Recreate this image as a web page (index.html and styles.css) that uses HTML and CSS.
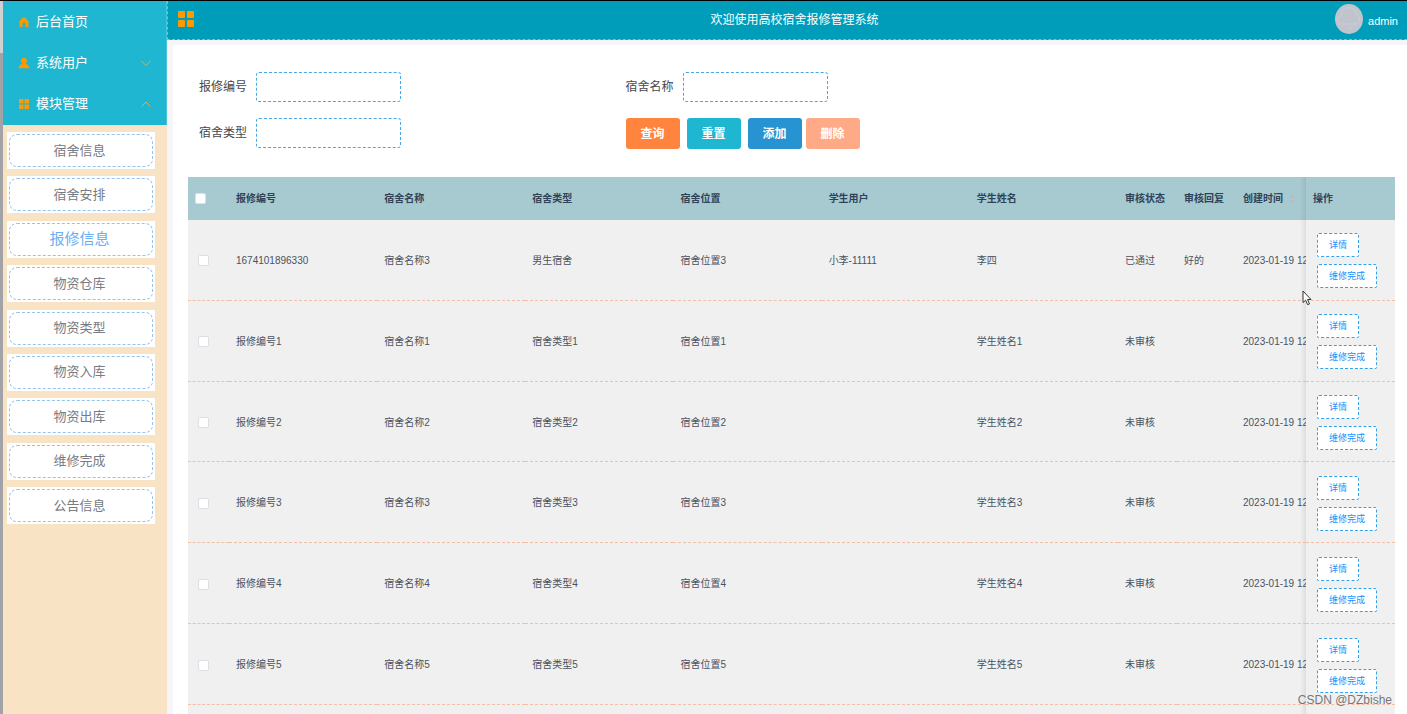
FILE: index.html
```html
<!DOCTYPE html>
<html lang="zh-CN">
<head>
<meta charset="utf-8">
<title>高校宿舍报修管理系统</title>
<link rel="stylesheet" href="styles.css">
</head>
<body>
<div class="app">
  <aside class="sidebar">
    <nav class="menu">
      <a class="menu-item" href="#"><svg class="menu-icon" viewBox="0 0 12 12"><path d="M6 .8 11.6 6.3H10.400V11H7.500V7.600Q7.500 6.500 6 6.500T4.500 7.600V11H1.600V6.300H.4Z"/></svg><span>后台首页</span></a>
      <a class="menu-item" href="#"><svg class="menu-icon" viewBox="0 0 12 12"><circle cx="6" cy="3.600" r="2.900"/><path d="M.6 11.300C.6 8.600 2 7.500 4.300 6.900V5H7.700V6.900C10 7.500 11.400 8.600 11.400 11.300Z"/></svg><span>系统用户</span><svg class="chevron" viewBox="0 0 12 12"><path d="m1.500 4 4.500 4.500L10.500 4"/></svg></a>
      <a class="menu-item" href="#"><svg class="menu-icon" viewBox="0 0 12 12"><path d="M1 1h4.500v4.500H1zM6.500 1H11v4.500H6.500zM1 6.500h4.500V11H1zM6.500 6.500H11V11H6.500z"/></svg><span>模块管理</span><svg class="chevron" viewBox="0 0 12 12"><path d="m1.500 8.500 4.500-4.500 4.500 4.500"/></svg></a>
    </nav>
    <ul class="submenu">
      <li class="sub-item"><a class="sub-link" href="#">宿舍信息</a></li>
      <li class="sub-item"><a class="sub-link" href="#">宿舍安排</a></li>
      <li class="sub-item"><a class="sub-link active" href="#">报修信息</a></li>
      <li class="sub-item"><a class="sub-link" href="#">物资仓库</a></li>
      <li class="sub-item"><a class="sub-link" href="#">物资类型</a></li>
      <li class="sub-item"><a class="sub-link" href="#">物资入库</a></li>
      <li class="sub-item"><a class="sub-link" href="#">物资出库</a></li>
      <li class="sub-item"><a class="sub-link" href="#">维修完成</a></li>
      <li class="sub-item"><a class="sub-link" href="#">公告信息</a></li>
    </ul>
  </aside>
  <div class="content">
    <header class="topbar">
      <button class="toggle" type="button" aria-label="菜单"><svg class="toggle-icon" viewBox="0 0 16 16"><rect width="7" height="7" rx="1"/><rect x="9" width="7" height="7" rx="1"/><rect y="9" width="7" height="7" rx="1"/><rect x="9" y="9" width="7" height="7" rx="1"/></svg></button>
      <h1 class="title">欢迎使用高校宿舍报修管理系统</h1>
      <div class="account">
        <svg class="avatar" viewBox="0 0 28 30"><ellipse cx="14" cy="15" rx="14" ry="15" fill="#c0c4cc"/><path d="M7 20a4 4 0 0 1-1-8 8 8 0 0 1 16-1 5 5 0 0 1 0 9H7M13 23l2 2 2-2" fill="none" stroke="#cbced5"/></svg>
        <span class="user-name">admin</span>
      </div>
    </header>
    <main class="panel">
      <form class="search">
        <div class="field"><label for="code">报修编号</label><input class="text" id="code" type="text"></div>
        <div class="field"><label for="dorm">宿舍名称</label><input class="text" id="dorm" type="text"></div>
        <div class="field"><label for="kind">宿舍类型</label><input class="text" id="kind" type="text"></div>
        <div class="actions">
          <div class="group"><button class="btn query" type="button">查询</button><button class="btn reset" type="button">重置</button></div>
          <div class="group tight"><button class="btn add" type="button">添加</button><button class="btn remove" type="button">删除</button></div>
        </div>
      </form>
      <div class="table-wrap">
        <table class="grid">
          <colgroup><col class="c-check"><col><col><col><col><col><col><col class="c-state"><col class="c-state"><col class="c-date"><col class="c-op"></colgroup>
          <thead>
            <tr><th class="check"><input class="box" type="checkbox" aria-label="全选"></th><th>报修编号</th><th>宿舍名称</th><th>宿舍类型</th><th>宿舍位置</th><th>学生用户</th><th>学生姓名</th><th>审核状态</th><th>审核回复</th><th class="date">创建时间<svg class="sort" viewBox="0 0 6 10"><path d="M3 0 6 4H0zM3 10 0 6h6z"/></svg></th><th>操作</th></tr>
          </thead>
          <tbody>
            <tr><td class="check"><input class="box" type="checkbox" aria-label="选择"></td><td>1674101896330</td><td>宿舍名称3</td><td>男生宿舍</td><td>宿舍位置3</td><td>小李-11111</td><td>李四</td><td>已通过</td><td>好的</td><td class="date">2023-01-19 12:18</td><td class="op"><div class="ops"><button class="mini" type="button">详情</button><button class="mini" type="button">维修完成</button></div></td></tr>
            <tr><td class="check"><input class="box" type="checkbox" aria-label="选择"></td><td>报修编号1</td><td>宿舍名称1</td><td>宿舍类型1</td><td>宿舍位置1</td><td></td><td>学生姓名1</td><td>未审核</td><td></td><td class="date">2023-01-19 12:18</td><td class="op"><div class="ops"><button class="mini" type="button">详情</button><button class="mini" type="button">维修完成</button></div></td></tr>
            <tr><td class="check"><input class="box" type="checkbox" aria-label="选择"></td><td>报修编号2</td><td>宿舍名称2</td><td>宿舍类型2</td><td>宿舍位置2</td><td></td><td>学生姓名2</td><td>未审核</td><td></td><td class="date">2023-01-19 12:18</td><td class="op"><div class="ops"><button class="mini" type="button">详情</button><button class="mini" type="button">维修完成</button></div></td></tr>
            <tr><td class="check"><input class="box" type="checkbox" aria-label="选择"></td><td>报修编号3</td><td>宿舍名称3</td><td>宿舍类型3</td><td>宿舍位置3</td><td></td><td>学生姓名3</td><td>未审核</td><td></td><td class="date">2023-01-19 12:18</td><td class="op"><div class="ops"><button class="mini" type="button">详情</button><button class="mini" type="button">维修完成</button></div></td></tr>
            <tr><td class="check"><input class="box" type="checkbox" aria-label="选择"></td><td>报修编号4</td><td>宿舍名称4</td><td>宿舍类型4</td><td>宿舍位置4</td><td></td><td>学生姓名4</td><td>未审核</td><td></td><td class="date">2023-01-19 12:18</td><td class="op"><div class="ops"><button class="mini" type="button">详情</button><button class="mini" type="button">维修完成</button></div></td></tr>
            <tr><td class="check"><input class="box" type="checkbox" aria-label="选择"></td><td>报修编号5</td><td>宿舍名称5</td><td>宿舍类型5</td><td>宿舍位置5</td><td></td><td>学生姓名5</td><td>未审核</td><td></td><td class="date">2023-01-19 12:18</td><td class="op"><div class="ops"><button class="mini" type="button">详情</button><button class="mini" type="button">维修完成</button></div></td></tr>
          </tbody>
        </table>
      </div>
    </main>
  </div>
</div>
<svg class="cursor" viewBox="0 0 10 16"><path d="M1 1v11.500l2.600-2.300 2 4.500 1.900-.8-2-4.400H9Z" fill="#fff" stroke="#333"/></svg>
<span class="watermark">CSDN @DZbishe</span>
</body>
</html>
```
FILE: styles.css
```css
* { box-sizing: border-box; }
body {
  margin: 0;
  height: 100vh;
  overflow: hidden;
  position: relative;
  background: #fff;
  color: #45484d;
  font: 12px/16px "Liberation Sans", "Noto Sans CJK SC", sans-serif;
}
button, input { font: inherit; }
a { color: inherit; text-decoration: none; }

.app {
  display: flex;
  height: 100vh;
  border-top: 1px solid #000;
}

/* Sidebar */
.sidebar {
  flex: 0 0 167px;
  padding-left: 3px;
  background: linear-gradient(#d0d0d0 52px, #a2a3a7 52px) left / 3px 100% no-repeat, #f8e3c4;
}
.menu {
  padding-bottom: 1px;
  background: #1eb6d0;
  border-right: 1px solid #45c3d8;
}
.menu-item {
  display: flex;
  align-items: center;
  height: 41px;
  padding: 0 14px 0 15px;
  gap: 6px;
  color: #fff;
  font-size: 13px;
}
.menu-icon { width: 12px; height: 12px; fill: #ff9900; }
.chevron {
  width: 12px;
  height: 12px;
  margin-left: auto;
  fill: none;
  stroke: #d9ae5c;
}
.submenu {
  display: flex;
  flex-direction: column;
  justify-content: space-between;
  min-height: 392px;
  margin: 7px 12px 0 4px;
  padding: 0;
  list-style: none;
}
.sub-item { padding: 2px; background: #fff; }
.sub-link {
  display: flex;
  align-items: center;
  justify-content: center;
  height: 33px;
  padding-right: 3px;
  border: 1px dashed #94c4ee;
  border-radius: 8px;
  color: #777b83;
  font-size: 13px;
}
.sub-link.active { color: #6aaef5; font-size: 15px; }

/* Top bar */
.content {
  flex: 1;
  min-width: 0;
  display: flex;
  flex-direction: column;
  background: #f5f5fa;
}
.topbar {
  display: grid;
  grid-template-columns: 1fr auto 1fr;
  align-items: center;
  height: 39px;
  padding: 0 9px 2px;
  border: 1px dashed #c8b43c;
  border-width: 0 0 1px 1px;
  background: #009dba;
  color: #fff;
}
.toggle { width: 18px; padding: 0 1px; border: 0; background: none; }
.toggle-icon { display: block; width: 16px; height: 16px; fill: #ff9900; }
.title {
  margin: 0;
  padding: 2px 0 0 14px;
  font-size: 12px;
  font-weight: 400;
}
.account {
  display: flex;
  align-items: center;
  justify-content: flex-end;
  gap: 5px;
  font-size: 11px;
}
.avatar { width: 28px; height: 30px; }
.user-name { padding-top: 3px; }

/* Panel */
.panel {
  flex: 1;
  min-height: 0;
  display: flex;
  flex-direction: column;
  margin: 5px 0 0 6px;
  padding: 27px 12px 0 15px;
  background: #fff;
}
.search {
  display: grid;
  grid-template-columns: 36% 1fr;
  align-items: start;
  row-gap: 16px;
  padding: 0 11px;
  margin-bottom: 28px;
}
.field { display: flex; align-items: center; gap: 9px; }
.text {
  width: 145px;
  height: 30px;
  padding: 0 8px;
  border: 1px dashed #4ba6e3;
  border-radius: 3px;
  background: #fff;
}
.actions, .group { display: flex; gap: 7px; }
.group.tight { gap: 4px; }
.btn {
  width: 54px;
  height: 31px;
  padding: 0;
  border: 0;
  border-radius: 3px;
  color: #fff;
  font-weight: 700;
}
.query { background: #ff843d; }
.reset { background: #1eb6d0; }
.add { background: #2893d1; }
.remove { background: #ffaa87; }

/* Table */
.table-wrap {
  flex: 1;
  min-height: 0;
  overflow: hidden;
  background: linear-gradient(to left, #dedede, #f0f0f0) right 89px top / 6px 100% no-repeat, #f0f0f0;
}
.grid {
  width: 100%;
  height: 528px;
  table-layout: fixed;
  border-spacing: 0;
  font-size: 10px;
  color: #4a5361;
}
.c-check { width: 41px; }
.c-state { width: 59px; }
.c-date { width: 70px; }
.c-op { width: 89px; }
.grid th, .grid td {
  padding: 0 7px;
  text-align: left;
  white-space: nowrap;
  overflow: hidden;
}
.grid th {
  height: 43px;
  background: #a7cad0;
  color: #2f4358;
  font-weight: 700;
}
.grid td {
  padding-top: 2px;
  border-bottom: 1px dashed #f5bda3;
}
.grid td.check { padding-left: 10px; }
.grid .date { padding-right: 0; text-overflow: clip; }
.grid th.date { background: linear-gradient(to left, #99bac0, #a7cad0) right / 6px 100% no-repeat, #a7cad0; }
.sort { width: 6px; height: 10px; margin-left: 6px; fill: #b8bcc8; vertical-align: middle; }
.box {
  appearance: none;
  display: block;
  width: 11px;
  height: 11px;
  margin: 0;
  border: 1px solid #dcdfe6;
  border-radius: 2px;
  background: #fff;
}
.grid td.op { padding: 2px 11px 0; }
.ops {
  display: flex;
  flex-direction: column;
  align-items: flex-start;
  gap: 7px;
}
.mini {
  height: 24px;
  padding: 0 11px;
  border: 1px dashed #35a0ea;
  border-radius: 2px;
  background: #fff;
  color: #1890ff;
  font-size: 9px;
}

/* Overlays */
.cursor { position: absolute; left: 1302px; top: 290px; width: 10px; height: 16px; }
.watermark {
  position: absolute;
  right: 15px;
  bottom: 6px;
  color: #77777a;
  font-size: 12px;
}
```
